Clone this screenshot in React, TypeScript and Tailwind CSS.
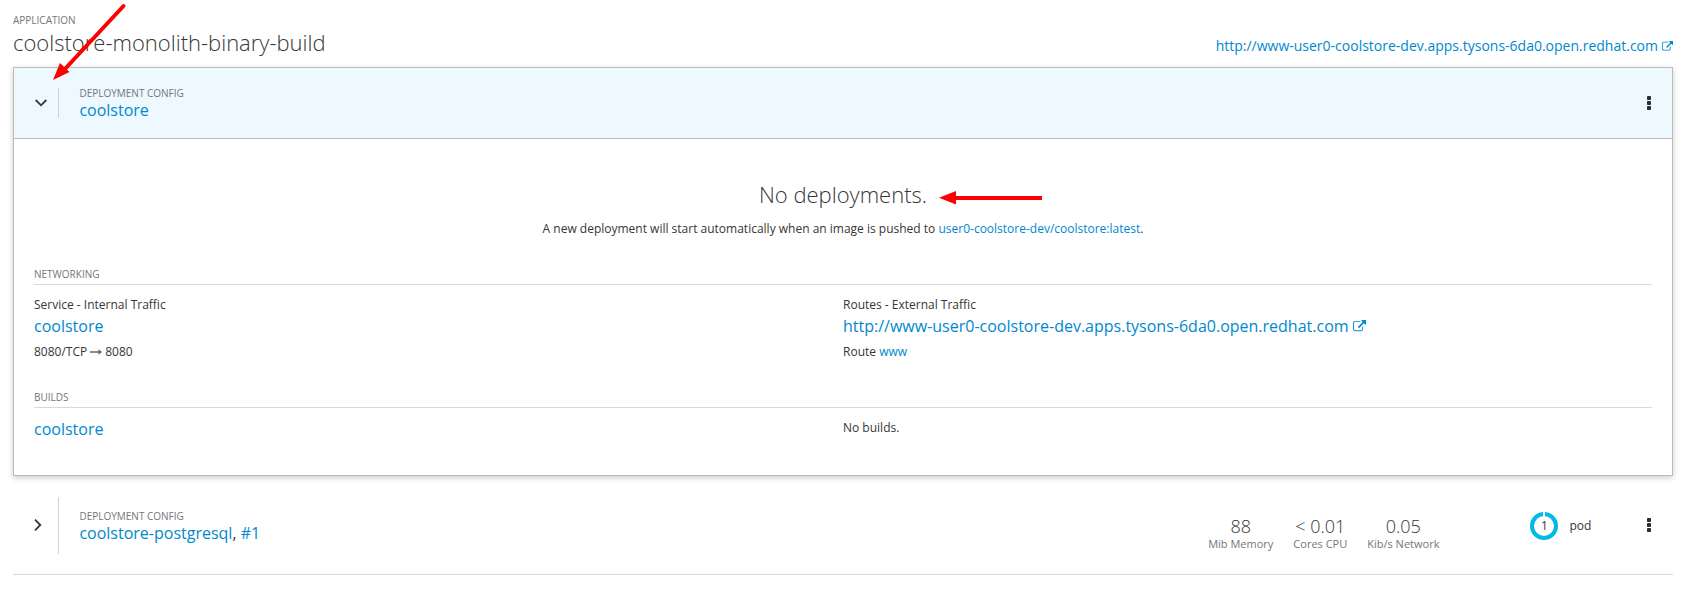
import type { ReactNode } from "react";

const URL_TEXT = "http://www-user0-coolstore-dev.apps.tysons-6da0.open.redhat.com";

function Link({ children }: { children: ReactNode }) {
  return <a className="text-[#0088ce]">{children}</a>;
}

function ExternalIcon({ className }: { className: string }) {
  return (
    <svg viewBox="0 0 1792 1792" fill="currentColor" className={className}>
      <path d="M1408 928v320q0 119-84.500 203.500t-203.500 84.500h-832q-119 0-203.500-84.500t-84.500-203.500v-832q0-119 84.500-203.500t203.500-84.500h704q14 0 23 9t9 23v64q0 14-9 23t-23 9h-704q-66 0-113 47t-47 113v832q0 66 47 113t113 47h832q66 0 113-47t47-113v-320q0-14 9-23t23-9h64q14 0 23 9t9 23zm384-864v512q0 26-19 45t-45 19-45-19l-176-176-652 652q-10 10-23 10t-23-10l-114-114q-10-10-10-23t10-23l652-652-176-176q-19-19-19-45t19-45 45-19h512q26 0 45 19t19 45z" />
    </svg>
  );
}

function Kebab() {
  return (
    <svg viewBox="0 0 4 14" className="h-[14px] w-1 shrink-0" fill="#292e34">
      <rect width="4" height="4" rx="0.8" />
      <rect y="5" width="4" height="4" rx="0.8" />
      <rect y="10" width="4" height="4" rx="0.8" />
    </svg>
  );
}

function Label({ children }: { children: ReactNode }) {
  return <div className="text-[10px] leading-4 text-[#72767b] uppercase">{children}</div>;
}

function Metric({ value, unit }: { value: string; unit: string }) {
  return (
    <div className="text-center">
      <div className="text-[18px] leading-5 font-light">{value}</div>
      <div className="text-[11px] leading-4 text-[#72767b]">{unit}</div>
    </div>
  );
}

export default function App() {
  return (
    <div className="relative h-[597px] overflow-hidden bg-white pt-3 pr-[10px] pl-[13px] font-['Open_Sans',sans-serif] text-xs text-[#363636]">
      <Label>Application</Label>
      <div className="flex h-[39px] justify-between">
        <h2 className="pt-[2px] text-[22px] leading-6 font-light">coolstore-monolith-binary-build</h2>
        <div className="flex items-center self-start pt-2 text-[14px] leading-5 text-[#0088ce]">
          <span>{URL_TEXT}</span>
          <ExternalIcon className="ml-1 size-[11px]" />
        </div>
      </div>

      <section className="h-[409px] border border-[#bbb] shadow-[0_2px_6px_rgba(3,3,3,0.2)]">
        <header className="flex h-[71px] items-center border-b border-[#bbb] bg-[#edf8ff] pr-[21px]">
          <div className="flex h-[30px] w-[45px] items-center border-r border-[#d1d1d1] pl-[21px]">
            <svg viewBox="0 0 12 8" className="h-2 w-3" fill="none" stroke="#363636" strokeWidth="1.800">
              <path d="M0.700 1 6 6.300 11.300 1" />
            </svg>
          </div>
          <div className="flex-1 pb-[2px] pl-[20.4px]">
            <Label>Deployment config</Label>
            <div className="text-base leading-[18px]"><Link>coolstore</Link></div>
          </div>
          <Kebab />
        </header>

        <div className="px-5">
          <div className="flex h-[127px] flex-col items-center pt-[43px]">
            <h2 className="text-[22px] leading-6 font-light">No deployments.</h2>
            <p className="mt-[13px] leading-5">
              A new deployment will start automatically when an image is pushed to <Link>user0-coolstore-dev/coolstore:latest</Link>.
            </p>
          </div>
          <div className="h-[19px] border-b border-[#d9d9d9]"><Label>Networking</Label></div>
          <div className="grid h-[104px] grid-cols-2 pt-[10px]">
            <div>
              <div className="leading-5">Service - Internal Traffic</div>
              <div className="text-base leading-[22px]"><Link>coolstore</Link></div>
              <div className="mt-[5px] flex items-center leading-5">
                8080/TCP
                <svg viewBox="0 0 12 6" className="mx-[3px] h-[6px] w-3 text-[#666]" fill="currentColor">
                  <path d="M0 2.300h8.500V0.300l3.500 2.700-3.500 2.700V3.700H0z" />
                </svg>
                8080
              </div>
            </div>
            <div>
              <div className="leading-5">Routes - External Traffic</div>
              <div className="flex items-center text-base leading-[22px] text-[#0088ce]">
                <span>{URL_TEXT}</span>
                <ExternalIcon className="ml-1 size-[13px]" />
              </div>
              <div className="mt-[5px] leading-5">Route <Link>www</Link></div>
            </div>
          </div>
          <div className="h-[19px] border-b border-[#d9d9d9]"><Label>Builds</Label></div>
          <div className="grid grid-cols-2 pt-[9px]">
            <div className="text-base leading-6"><Link>coolstore</Link></div>
            <div className="pt-px leading-5">No builds.</div>
          </div>
        </div>
      </section>

      <section className="flex h-[99px] items-center border-b border-[#d9d9d9] pr-[22px]">
        <div className="flex h-[57px] w-[46px] items-center border-r border-[#d1d1d1] pl-[21px]">
          <svg viewBox="0 0 8 12" className="h-3 w-2" fill="none" stroke="#363636" strokeWidth="1.800">
            <path d="M1 0.700 6.300 6 1 11.300" />
          </svg>
        </div>
        <div className="flex-1 pl-[20.4px]">
          <Label>Deployment config</Label>
          <div className="text-base leading-[18px]"><Link>coolstore-postgresql</Link>, <Link>#1</Link></div>
        </div>
        <div className="mt-[18px] mr-[91px] flex gap-5">
          <Metric value="88" unit="Mib Memory" />
          <Metric value="< 0.01" unit="Cores CPU" />
          <Metric value="0.05" unit="Kib/s Network" />
        </div>
        <div className="mt-[2px] mr-[55.700px] flex items-center">
          <div className="grid size-7 place-items-center">
            <svg viewBox="0 0 28 28" className="col-start-1 row-start-1 size-7" fill="none">
              <circle cx="14" cy="14" r="12" stroke="#00b9e4" strokeWidth="4" />
              <path d="M14 0v5" stroke="#fff" strokeWidth="2" />
            </svg>
            <span className="col-start-1 row-start-1">1</span>
          </div>
          <span className="ml-[11px]">pod</span>
        </div>
        <Kebab />
      </section>

      <svg viewBox="0 0 1683 597" className="pointer-events-none absolute top-0 left-0 h-[597px] w-[1683px]" fill="#f00">
        <path d="M123.500 6 64 70" stroke="#f00" strokeWidth="4" strokeLinecap="round" />
        <path d="M53 80 60 63 69.500 72z" />
        <path d="M1042 198H954" stroke="#f00" strokeWidth="4" />
        <path d="M939 197.700 956 191v13.400z" />
      </svg>
    </div>
  );
}
